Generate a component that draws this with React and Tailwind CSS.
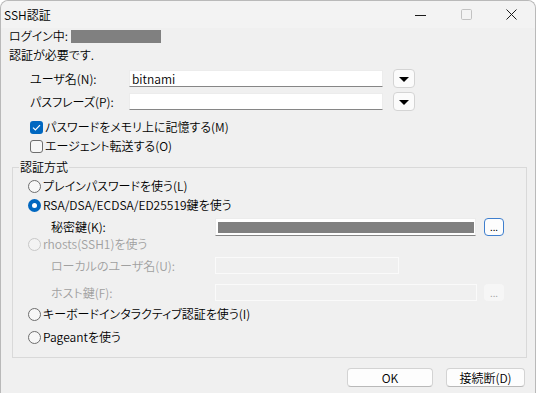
import React from "react";

const font = {
  fontFamily: '"Noto Sans CJK JP", "Noto Sans", sans-serif',
};

function Radio({ checked, disabled }) {
  if (checked) {
    return (
      <span className="w-[13px] h-[13px] rounded-full bg-[#0067c0] flex items-center justify-center shrink-0">
        <span className="w-[5px] h-[5px] rounded-full bg-white" />
      </span>
    );
  }
  return (
    <span
      className={
        "w-[13px] h-[13px] rounded-full shrink-0 border " +
        (disabled ? "border-[#c8c8c8] bg-[#f3f3f3]" : "border-[#6e6e6e] bg-[#f7f7f7]")
      }
    />
  );
}

function Checkbox({ checked }) {
  if (checked) {
    return (
      <span className="w-[13px] h-[13px] rounded-[3px] bg-[#0067c0] flex items-center justify-center shrink-0">
        <svg width="9" height="7" viewBox="0 0 9 7">
          <path d="M1 3.6 L3.4 6 L8 1.2" fill="none" stroke="white" strokeWidth="1.2" />
        </svg>
      </span>
    );
  }
  return <span className="w-[13px] h-[13px] rounded-[3px] border border-[#6e6e6e] bg-[#f7f7f7] shrink-0" />;
}

function DropBtn() {
  return (
    <div className="w-[22px] h-[19px] rounded-[4px] border border-[#d4d4d4] bg-[#fbfbfb] flex items-center justify-center">
      <svg width="10" height="5" viewBox="0 0 10 5" className="mt-[1px]">
        <path d="M0 0 H10 L5 5 Z" fill="black" />
      </svg>
    </div>
  );
}

export default function App() {
  return (
    <div className="w-[536px] h-[393px] bg-white overflow-hidden [font-feature-settings:'palt'] font-[350]" style={font}>
      <div className="w-[536px] h-[393px] bg-[#f0f0f0] rounded-t-[8px] border-t border-x border-[#b9b9b9] flex flex-col text-[12px] leading-[16px] text-black">
        {/* Title bar */}
        <div className="h-[27px] flex items-center bg-[#f3f3f3] rounded-t-[8px]">
          <div className="pl-[3px] pt-[1px]">SSH認証</div>
          <div className="ml-auto flex h-full">
            <div className="w-[46px] flex items-center justify-center pt-[2px]">
              <svg width="11" height="2" viewBox="0 0 11 2">
                <rect x="0" y="0" width="11" height="1" fill="#1a1a1a" />
              </svg>
            </div>
            <div className="w-[46px] flex items-center justify-center">
              <svg width="11" height="11" viewBox="0 0 11 11">
                <rect x="0.5" y="0.5" width="10" height="10" rx="1.2" fill="none" stroke="#c2c2c2" />
              </svg>
            </div>
            <div className="w-[46px] flex items-center justify-center pr-[2px]">
              <svg width="11" height="11" viewBox="0 0 11 11">
                <path d="M0.5 0.5 L10.5 10.5 M10.5 0.5 L0.5 10.5" stroke="#1a1a1a" strokeWidth="1" />
              </svg>
            </div>
          </div>
        </div>

        {/* login row */}
        <div className="mt-[1px] h-[14px] flex items-center pl-[8px]">
          <span>ログイン中:</span>
          <span className="ml-[3px] w-[90px] h-[13px] bg-[#808080]" />
        </div>
        <div className="mt-[4px] h-[16px] flex items-center pl-[8px]">認証が必要です.</div>

        {/* user row */}
        <div className="mt-[6px] h-[19px] flex items-center pl-[29px]">
          <span className="w-[99px]">ユーザ名(N):</span>
          <div className="w-[254px] h-[17px] bg-white border border-[#ececec] border-b-[#868686] flex items-center pl-[2px]">
            bitnami
          </div>
          <div className="ml-[10px]">
            <DropBtn />
          </div>
        </div>
        <div className="mt-[4px] h-[19px] flex items-center pl-[29px]">
          <span className="w-[99px]">パスフレーズ(P):</span>
          <div className="w-[254px] h-[17px] bg-white border border-[#ececec] border-b-[#868686]" />
          <div className="ml-[10px]">
            <DropBtn />
          </div>
        </div>

        <div className="mt-[8px] h-[16px] flex items-center pl-[29px] gap-[2px]">
          <Checkbox checked />
          <span>パスワードをメモリ上に記憶する(M)</span>
        </div>
        <div className="mt-[3px] h-[16px] flex items-center pl-[29px] gap-[2px]">
          <Checkbox />
          <span>エージェント転送する(O)</span>
        </div>

        {/* group box */}
        <div className="relative mt-[13px] ml-[11px] w-[515px] border border-[#d9d9d9] pt-[10px] pb-[12px] flex flex-col">
          <span className="absolute left-[6px] top-[-9px] px-[1px] bg-[#f0f0f0] leading-[16px]">認証方式</span>

          <div className="h-[16px] flex items-center pl-[15px] gap-[2px]">
            <Radio />
            <span>プレインパスワードを使う(L)</span>
          </div>
          <div className="mt-[3px] h-[16px] flex items-center pl-[15px] gap-[2px]">
            <Radio checked />
            <span>RSA/DSA/ECDSA/ED25519鍵を使う</span>
          </div>
          <div className="mt-[5px] h-[18px] flex items-center pl-[38px]">
            <span className="w-[164px]">秘密鍵(K):</span>
            <div className="w-[261px] h-[18px] bg-white border border-[#ececec] border-b-[#868686] flex items-center pl-[2px] pr-[1px]">
              <span className="w-full h-[11px] bg-[#808080]" />
            </div>
            <div className="ml-[8px] w-[20px] h-[18px] rounded-[4px] border border-[#3f7fce] bg-[#fdfdfd] flex items-center justify-center text-[10px] leading-[10px] pb-[1px]">
              ...
            </div>
          </div>
          <div className="h-[16px] flex items-center pl-[15px] gap-[2px] text-[#a0a0a0]">
            <Radio disabled />
            <span>rhosts(SSH1)を使う</span>
          </div>
          <div className="mt-[5px] h-[17px] flex items-center pl-[38px] text-[#a0a0a0]">
            <span className="w-[164px]">ローカルのユーザ名(U):</span>
            <div className="w-[184px] h-[17px] border border-[#fafafa] bg-[#f0f0f0]" />
          </div>
          <div className="mt-[10px] h-[17px] flex items-center pl-[38px] text-[#a0a0a0]">
            <span className="w-[164px]">ホスト鍵(F):</span>
            <div className="w-[262px] h-[17px] border border-[#fafafa] bg-[#f0f0f0]" />
            <div className="ml-[7px] w-[20px] h-[17px] rounded-[4px] bg-[#f6f6f6] flex items-center justify-center text-[10px] leading-[10px] text-[#a8a8a8]">
              ...
            </div>
          </div>
          <div className="mt-[5px] h-[16px] flex items-center pl-[15px] gap-[2px]">
            <Radio />
            <span>キーボードインタラクティブ認証を使う(I)</span>
          </div>
          <div className="mt-[7px] h-[16px] flex items-center pl-[15px] gap-[2px]">
            <Radio />
            <span>Pageantを使う</span>
          </div>
        </div>

        {/* buttons */}
        <div className="mt-[10px] flex justify-end pr-[10px] gap-[13px]">
          <div className="w-[86px] h-[19px] rounded-[4px] border border-[#d3d3d3] border-b-[#b9b9b9] bg-[#fdfdfd] flex items-center justify-center">
            OK
          </div>
          <div className="w-[79px] h-[19px] rounded-[4px] border border-[#d3d3d3] border-b-[#b9b9b9] bg-[#fdfdfd] flex items-center justify-center">
            接続断(D)
          </div>
        </div>
      </div>
    </div>
  );
}
